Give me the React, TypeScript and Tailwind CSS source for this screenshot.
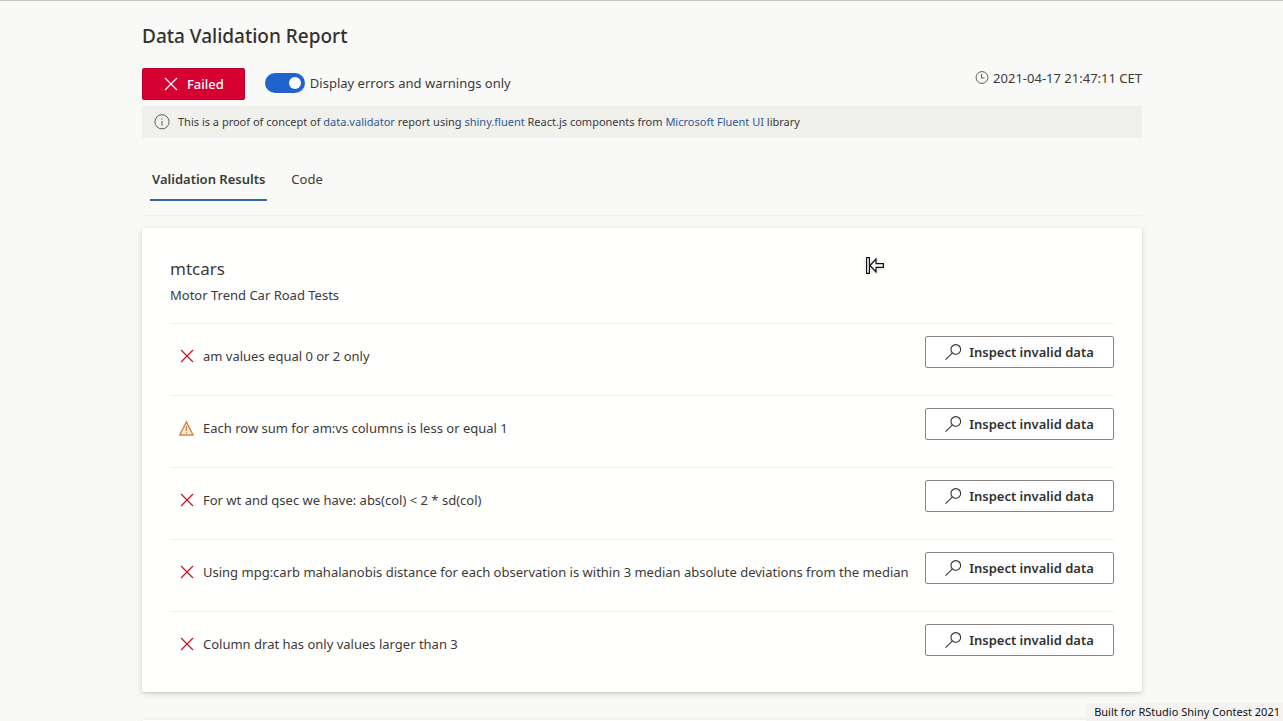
import { useState } from "react";

type Status = "error" | "warning";

const results: { status: Status; text: string }[] = [
  { status: "error", text: "am values equal 0 or 2 only" },
  { status: "warning", text: "Each row sum for am:vs columns is less or equal 1" },
  { status: "error", text: "For wt and qsec we have: abs(col) < 2 * sd(col)" },
  {
    status: "error",
    text: "Using mpg:carb mahalanobis distance for each observation is within 3 median absolute deviations from the median",
  },
  { status: "error", text: "Column drat has only values larger than 3" },
];

function CrossIcon({ className }: { className: string }) {
  return (
    <svg className={className} viewBox="0 0 16 16" fill="none" stroke="currentColor" strokeWidth="1.2" aria-hidden="true">
      <path d="M2 2l12 12M14 2L2 14" />
    </svg>
  );
}

function WarningIcon() {
  return (
    <svg className="size-4 shrink-0 text-[#d98445]" viewBox="0 0 16 16" fill="none" stroke="currentColor" aria-hidden="true">
      <path d="M7.4 2L14 15H.8z" fill="#fdf0e0" strokeWidth="1.5" />
      <path d="M7.4 6v5M7.4 12v1.3" strokeWidth="1.3" />
    </svg>
  );
}

function SearchIcon() {
  return (
    <svg className="size-4 shrink-0" viewBox="0 0 16 16" fill="none" stroke="currentColor" strokeWidth="1.1" aria-hidden="true">
      <circle cx="10.8" cy="5.4" r="4.8" />
      <path d="M7.4 8.8L.6 15.6" />
    </svg>
  );
}

function InfoIcon() {
  return (
    <svg className="size-4 shrink-0 text-[#605e5c]" viewBox="0 0 16 16" fill="none" stroke="currentColor" aria-hidden="true">
      <circle cx="8" cy="7.8" r="7.1" />
      <path d="M8 7v4.6M8 4.3v1.3" />
    </svg>
  );
}

function ClockIcon() {
  return (
    <svg className="size-[14px] shrink-0 text-[#605e5c]" viewBox="0 0 14 14" fill="none" stroke="currentColor" aria-hidden="true">
      <circle cx="7" cy="6.5" r="5.9" />
      <path d="M6.5 3v4h3" />
    </svg>
  );
}

function PointerIcon() {
  return (
    <svg
      className="pointer-events-none absolute top-[28px] right-[257px] h-[19px] w-[20px] drop-shadow-sm"
      viewBox="0 0 20 19"
      fill="#fff"
      stroke="#111"
      strokeWidth="1.2"
      aria-hidden="true"
    >
      <path d="M1.6 1.6h2.8v15.8H1.6z" />
      <path d="M5 9.5L11 3v4.6h7.4v3.8H11V16z" />
    </svg>
  );
}

export default function App() {
  const [filtered, setFiltered] = useState(true);
  const [tab, setTab] = useState("results");

  return (
    <div className="relative h-screen overflow-hidden border-t border-[#cacaca] bg-[#f9f9f8] pr-4 pl-[17px] font-['Noto_Sans','Open_Sans',sans-serif] text-[13px] leading-5 text-[#3b3a39]">
      <div className="mx-auto max-w-[1000px]">
        <header className="pt-[21px]">
          <h1 className="text-[19px] leading-7 font-medium text-[#323130]">Data Validation Report</h1>
          <div className="mt-[18px] flex items-start justify-between">
            <div className="flex items-center gap-5">
              <button
                type="button"
                className="flex h-8 items-center gap-2 rounded-[2px] border border-[#b3002d] bg-[#d60031] px-5 font-medium text-white"
              >
                <CrossIcon className="size-4" />
                Failed
              </button>
              <label className="flex items-center gap-[5px] pb-0.5">
                <span className="relative flex h-5 w-10">
                  <input
                    type="checkbox"
                    role="switch"
                    checked={filtered}
                    onChange={(e) => setFiltered(e.target.checked)}
                    className="peer h-5 w-10 appearance-none rounded-full bg-[#8a8886] checked:bg-[#2163cc]"
                  />
                  <span className="pointer-events-none absolute top-1 left-1 size-3 rounded-full bg-white peer-checked:left-6" />
                </span>
                Display errors and warnings only
              </label>
            </div>
            <div className="flex items-center gap-1">
              <ClockIcon />
              <time dateTime="2021-04-17T21:47:11">2021-04-17 21:47:11 CET</time>
            </div>
          </div>
        </header>

        <div className="mt-[6px] flex h-8 items-center gap-2 bg-[#f0f0ed] px-3 text-[11px]">
          <InfoIcon />
          <p>
            This is a proof of concept of <a href="#validator" className="text-[#2f5a96]">data.validator</a> report using{" "}
            <a href="#fluent" className="text-[#2f5a96]">shiny.fluent</a> React.js components from{" "}
            <a href="#fluentui" className="text-[#2f5a96]">Microsoft Fluent UI</a> library
          </p>
        </div>

        <nav className="mt-5 flex h-[58px] gap-4 border-b border-[#f2f1f0] px-2" role="tablist">
          <button
            type="button"
            role="tab"
            aria-selected={tab === "results"}
            onClick={() => setTab("results")}
            className="h-[43px] border-b-2 border-transparent px-[2px] font-medium aria-selected:border-[#3465a8] aria-selected:font-semibold"
          >
            Validation Results
          </button>
          <button
            type="button"
            role="tab"
            aria-selected={tab === "code"}
            onClick={() => setTab("code")}
            className="h-[43px] border-b-2 border-transparent px-2 aria-selected:border-[#3465a8]"
          >
            Code
          </button>
        </nav>

        <main className="mt-3 flex flex-col gap-7">
          <section className="relative rounded-[2px] bg-[#fffffe] px-7 pt-7 pb-[9px] shadow-[0_2px_7px_rgba(0,0,0,0.13),0_1px_2px_rgba(0,0,0,0.11)]">
            <h2 className="pt-px text-[17px] leading-6">mtcars</h2>
            <p className="mt-1 pb-[18px]">Motor Trend Car Road Tests</p>
            <ul>
              {results.map((r) => (
                <li key={r.text} className="flex h-[72px] items-start justify-between border-t border-[#f0f0ef] pt-3">
                  <div className="flex h-10 items-center gap-2 pl-[9px]">
                    {r.status === "error" ? (
                      <CrossIcon className="size-4 shrink-0 text-[#cf0a2c]" />
                    ) : (
                      <WarningIcon />
                    )}
                    <span className="whitespace-nowrap">{r.text}</span>
                  </div>
                  <button
                    type="button"
                    className="flex h-8 w-[189px] shrink-0 items-center justify-center gap-2 rounded-[2px] border border-[#8a8886] bg-white font-semibold text-[#323130]"
                  >
                    <SearchIcon />
                    Inspect invalid data
                  </button>
                </li>
              ))}
            </ul>
            <PointerIcon />
          </section>
          <section className="h-40 rounded-[2px] bg-[#fffffe] shadow-[0_2px_7px_rgba(0,0,0,0.13),0_1px_2px_rgba(0,0,0,0.11)]" />
        </main>
      </div>
      <footer className="absolute right-0 bottom-0 bg-[#f4f3f2] pr-[3px] pl-2 text-[11px] leading-[18px] text-[#111]">
        Built for RStudio Shiny Contest 2021
      </footer>
    </div>
  );
}
